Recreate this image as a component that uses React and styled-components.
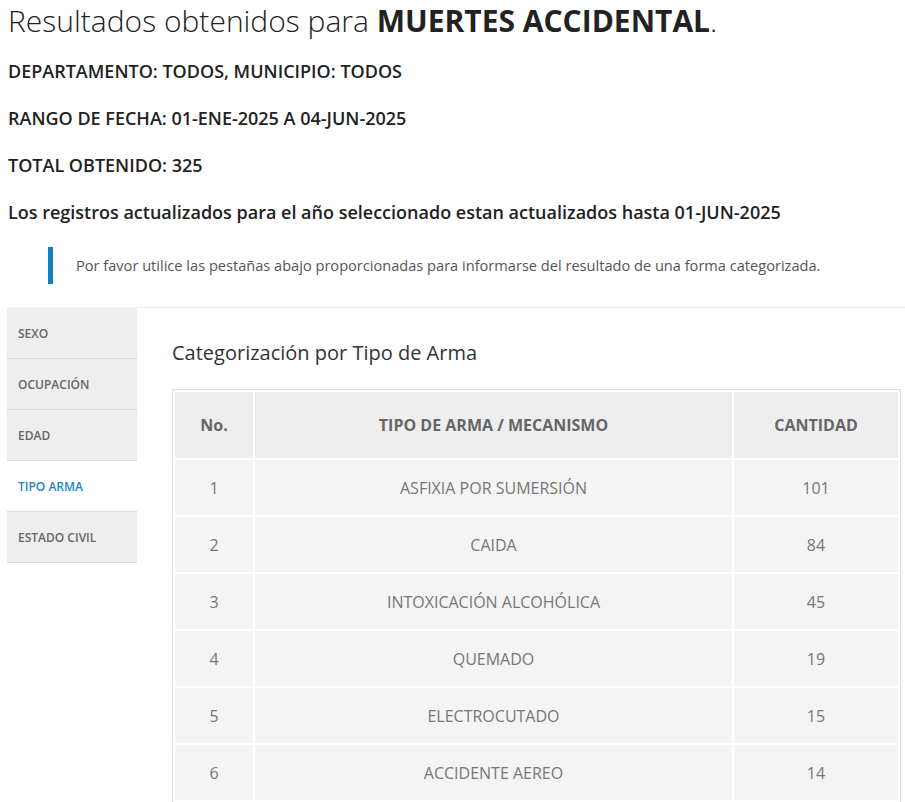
import React from 'react'
import styled, { createGlobalStyle } from 'styled-components'

const GlobalStyle = createGlobalStyle`
  html, body {
    margin: 0;
    padding: 0;
    background: #fff;
  }
  body {
    font-family: "Open Sans", "Liberation Sans", sans-serif;
    color: #222;
  }
`;

const Page = styled.div`
  padding: 0 0 0 8px;
`;

const Title = styled.h1`
  margin: 0 0 20px;
  font-size: 30px;
  line-height: normal;
  font-weight: 300;
  color: #222;

  strong {
    font-weight: 700;
  }
`;

const Info = styled.h4`
  margin: 0 0 27px;
  font-size: 18px;
  line-height: 20px;
  font-weight: 600;
  color: #222;
`;

const Note = styled.blockquote`
  margin: -2px 0 23px 40px;
  padding: 8px 0 8px 23px;
  border-left: 5px solid #0e80c2;
  font-size: 14.6px;
  line-height: 21px;
  color: #555;
`;

const TabArea = styled.div`
  display: flex;
  align-items: flex-start;
  border-top: 1px solid #eee;
`;

const TabList = styled.ul`
  list-style: none;
  margin: 0 0 0 -1px;
  padding: 0;
  width: 130px;
  flex-shrink: 0;
`;

const Tab = styled.li`
  height: 50px;
  display: flex;
  align-items: center;
  padding-left: 11px;
  border-bottom: 1px solid #ddd;
  background: ${props => (props.$active ? '#fff' : '#eee')};
  color: ${props => (props.$active ? '#1a86c6' : '#666')};
  font-size: 12px;
  font-weight: 600;
`;

const Panel = styled.div`
  flex: 1;
  padding: 34px 4px 0 35px;
`;

const PanelTitle = styled.h3`
  margin: 0 0 25px;
  font-size: 20px;
  line-height: 22px;
  font-weight: 400;
  color: #333;
`;

const Table = styled.table`
  width: 100%;
  border: 1px solid #ddd;
  border-collapse: separate;
  border-spacing: 2px;
  table-layout: fixed;
`;

const HeadCell = styled.th`
  width: ${props => props.$width || 'auto'};
  height: 66px;
  padding: 0;
  background: #eee;
  color: #666;
  font-size: 16px;
  font-weight: 700;
  text-align: center;
`;

const Cell = styled.td`
  height: 55px;
  padding: 0;
  background: #f4f4f4;
  color: #777;
  font-size: 16px;
  text-align: center;
`;

const tabs = ['SEXO', 'OCUPACIÓN', 'EDAD', 'TIPO ARMA', 'ESTADO CIVIL'];

const rows = [
  [1, 'ASFIXIA POR SUMERSIÓN', 101],
  [2, 'CAIDA', 84],
  [3, 'INTOXICACIÓN ALCOHÓLICA', 45],
  [4, 'QUEMADO', 19],
  [5, 'ELECTROCUTADO', 15],
  [6, 'ACCIDENTE AEREO', 14],
];

export default function App() {
  return (
    <Page>
      <GlobalStyle />
      <Title>
        Resultados obtenidos para <strong>MUERTES ACCIDENTAL</strong>.
      </Title>
      <Info>DEPARTAMENTO: TODOS, MUNICIPIO: TODOS</Info>
      <Info>RANGO DE FECHA: 01-ENE-2025 A 04-JUN-2025</Info>
      <Info>TOTAL OBTENIDO: 325</Info>
      <Info>Los registros actualizados para el año seleccionado estan actualizados hasta 01-JUN-2025</Info>
      <Note>
        Por favor utilice las pestañas abajo proporcionadas para informarse del resultado de una forma categorizada.
      </Note>
      <TabArea>
        <TabList>
          {tabs.map(t => (
            <Tab key={t} $active={t === 'TIPO ARMA'}>{t}</Tab>
          ))}
        </TabList>
        <Panel>
          <PanelTitle>Categorización por Tipo de Arma</PanelTitle>
          <Table>
            <thead>
              <tr>
                <HeadCell $width="78px">No.</HeadCell>
                <HeadCell>TIPO DE ARMA / MECANISMO</HeadCell>
                <HeadCell $width="164px">CANTIDAD</HeadCell>
              </tr>
            </thead>
            <tbody>
              {rows.map(([n, tipo, cant]) => (
                <tr key={n}>
                  <Cell>{n}</Cell>
                  <Cell>{tipo}</Cell>
                  <Cell>{cant}</Cell>
                </tr>
              ))}
            </tbody>
          </Table>
        </Panel>
      </TabArea>
    </Page>
  )
}
